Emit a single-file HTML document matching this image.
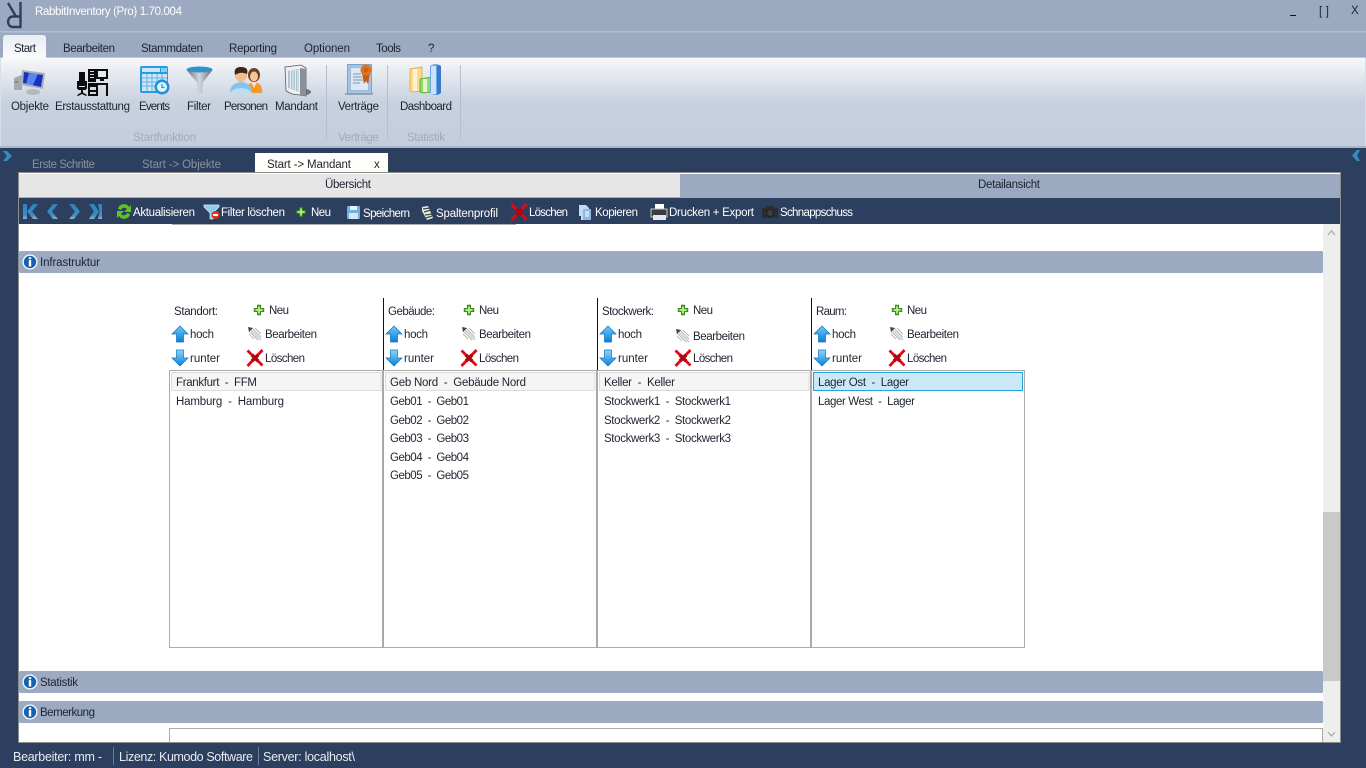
<!DOCTYPE html>
<html lang="de"><head><meta charset="utf-8"><title>RabbitInventory</title>
<style>
html,body{margin:0;padding:0;width:1366px;height:768px;overflow:hidden;background:#2d3f5e}
svg{display:block}
text{font-family:"Liberation Sans",sans-serif;font-size:11.5px;fill:#1d2430}
.w{fill:#fff}.g{fill:#a4aab6}.t{fill:#87929f}.s{fill:#e8ecf2;font-size:12.5px}
.l{fill:none;stroke:#a9a9a9}
</style></head><body>
<svg width="1366" height="768" viewBox="0 0 1366 768" xmlns="http://www.w3.org/2000/svg">
<defs>
<linearGradient id="rib" x1="0" y1="0" x2="0" y2="1"><stop offset="0" stop-color="#f7f8fa"/><stop offset=".5" stop-color="#c8d1df"/><stop offset="1" stop-color="#c3cddc"/></linearGradient>
<linearGradient id="tab" x1="0" y1="0" x2="0" y2="1"><stop offset="0" stop-color="#e9edf3"/><stop offset="1" stop-color="#fafbfc"/></linearGradient>
<linearGradient id="blue" x1="0" y1="0" x2="0" y2="1"><stop offset="0" stop-color="#6fcafa"/><stop offset="1" stop-color="#0a7fd6"/></linearGradient>
<linearGradient id="blue2" x1="0" y1="0" x2="0" y2="1"><stop offset="0" stop-color="#8fd6fb"/><stop offset="1" stop-color="#0a7fd6"/></linearGradient>
<linearGradient id="steel" x1="0" y1="0" x2="1" y2="0"><stop offset="0" stop-color="#68747f"/><stop offset=".5" stop-color="#cfd6dc"/><stop offset="1" stop-color="#636e78"/></linearGradient>
<linearGradient id="nav" x1="0" y1="0" x2="0" y2="1"><stop offset="0" stop-color="#2a84bd"/><stop offset=".75" stop-color="#3d8dbf"/><stop offset="1" stop-color="#8db1c6"/></linearGradient>
<g id="plus"><path d="M-2-6H2V-2H6V2H2V6H-2V2H-6V-2H-2Z" fill="#6fc13a" stroke="#2f7d18"/><path d="M-1-4H1V4H-1ZM-4-1H4V1H-4Z" fill="#bdf09a"/></g>
<g id="x"><path d="M-7.500-7.500 7.500 7.500M7.500-8-7.500 8" stroke="#e00a16" stroke-width="2.800" fill="none"/><path d="M-3-3 3 3M3-3-3 3" stroke="#b00610" stroke-width="3.600" fill="none"/></g>
<g id="up"><path d="M0-8 8 0H3.500V8H-3.500V0H-8Z" fill="url(#blue)" stroke="#0d73c0" stroke-width=".7"/></g>
<g id="down"><path d="M0 8 8 0H3.500V-8H-3.500V0H-8Z" fill="url(#blue2)" stroke="#0d73c0" stroke-width=".7"/></g>
<g id="edit"><path d="M-6-6 6 6M-3-6 6 3M-6-3 3 6M-6 0-1 5M0-6 6 0" stroke="#9aa99f" stroke-width=".8" fill="none"/><path d="M-7-7-2-6-6-2Z" fill="#444"/><path d="M-4-2 4 6 6 3-1-4Z" fill="#d2dbd4" opacity=".75"/></g>
<g id="info"><circle r="7.500" fill="#fff"/><circle r="6.200" fill="#1463b0"/><rect x="-1.200" y="-2" width="2.400" height="6.500" fill="#fff"/><rect x="-1.200" y="-4.800" width="2.400" height="2" fill="#fff"/></g>
</defs>

<!-- chrome -->
<rect width="1366" height="768" fill="#2d3f5e"/>
<rect width="1366" height="58" fill="#9ba9c1"/>
<rect y="31" width="1366" height="1.500" fill="#b3bfd1"/>
<rect y="58" width="1366" height="88" fill="url(#rib)"/>
<rect y="57" width="1366" height="1" fill="#bcc7d8"/>
<rect y="146" width="1366" height="2" fill="#a9b5c9"/>
<rect x="0" y="58" width="1" height="88" fill="#d8dee8"/>
<rect x="1365" y="58" width="1" height="88" fill="#d8dee8"/>

<!-- logo: R rotated 180 degrees -->
<path d="M20.500 2V27H13C6.500 27 6.500 16.500 13 16.500H20.500M16 16.500 8 3" fill="none" stroke="#2d3f5e" stroke-width="2.400"/>
<text x="35" y="15" textLength="147" class="w">RabbitInventory (Pro) 1.70.004</text>
<rect x="1290" y="15" width="6" height="1" fill="#111"/>
<text x="1319" y="15" textLength="10">[ ]</text>
<text x="1351" y="14" textLength="7">X</text>

<!-- menu -->
<path d="M3 58V38Q3 35 6 35H43Q46 35 46 38V58Z" fill="url(#tab)"/>
<text x="14" y="52" textLength="22">Start</text>
<text x="63" y="52" textLength="52">Bearbeiten</text>
<text x="141" y="52" textLength="62">Stammdaten</text>
<text x="229" y="52" textLength="48">Reporting</text>
<text x="304" y="52" textLength="46">Optionen</text>
<text x="376" y="52" textLength="25">Tools</text>
<text x="428" y="52" textLength="5">?</text>

<!-- Objekte icon -->
<g>
<ellipse cx="33" cy="92" rx="7" ry="3" fill="#b4b9be"/>
<path d="M14 78 22 75V90H14Z" fill="#a4aaaf"/><rect x="15" y="81" width="3" height="2" fill="#5fa35a"/>
<path d="M22 70 45 73 43 89 21 85Z" fill="#aab1b8"/>
<path d="M24 72 43 75 41 87 23 83Z" fill="#1532c0"/><path d="M29 73 38 74 33 85 26 84Z" fill="#5a85f0"/>
</g>
<!-- Erstausstattung icon -->
<g fill="#0c0c0c">
<path d="M79 72H85V86H79Z"/><rect x="77" y="81" width="2" height="8"/><rect x="85" y="81" width="2" height="8"/><path d="M78 87H86V90H78Z"/><rect x="81" y="90" width="2" height="3"/><path d="M77 95 82 92 87 95 86 96 82 94 78 96Z"/>
<path d="M88 69H96V82H88Z"/><rect x="90" y="71" width="4" height="1" fill="#ddd"/><rect x="90" y="74" width="4" height="1" fill="#ddd"/><rect x="90" y="77" width="4" height="1" fill="#ddd"/>
<path d="M96 69H108V79H96ZM98 71V77H106V71Z" fill-rule="evenodd"/><rect x="100" y="79" width="4" height="2"/>
<rect x="88" y="83" width="20" height="2"/><rect x="106" y="85" width="2" height="11"/>
<path d="M88 85H98V96H88ZM90 87V90H96V87ZM90 92V94H96V92Z" fill-rule="evenodd"/>
</g>
<!-- Events icon -->
<g>
<rect x="140" y="66" width="28" height="27" rx="2" fill="#2a9be0"/>
<rect x="142" y="68" width="18" height="4" fill="#c9e7f9"/><rect x="161" y="68" width="6" height="4" fill="#8ccdf2"/>
<rect x="142" y="74" width="25" height="17" fill="#cfe7f6"/>
<path d="M147 74V91M152 74V91M157 74V91M162 74V91M142 78H167M142 82H167M142 86H167" stroke="#5cb3e6" stroke-width="1"/>
<circle cx="162" cy="87" r="7.500" fill="#1c93dc"/><circle cx="162" cy="87" r="5" fill="#e6f5fd"/><path d="M162 84V87.500H164.500" stroke="#1c93dc" fill="none" stroke-width="1.200"/>
</g>
<!-- Filter icon -->
<g>
<path d="M186.500 70H212.500L202.500 83V93H197.500V83Z" fill="url(#steel)"/>
<ellipse cx="199.500" cy="69.500" rx="13" ry="3" fill="#2f93c9"/>
</g>
<!-- Personen icon -->
<g>
<ellipse cx="254" cy="75" rx="6" ry="7" fill="#6e4020"/><ellipse cx="254" cy="76.500" rx="4" ry="5" fill="#f3c69a"/>
<path d="M247 93Q246 83 254 82Q263 83 262 93Z" fill="#f39a2b"/><path d="M251 82H257L254 88Z" fill="#fbe2c4"/>
<ellipse cx="241" cy="75" rx="6" ry="7" fill="#f0bd8d"/><path d="M235 75Q233 67 241 67Q249 67 247 74Q241 71 235 75Z" fill="#3f2612"/>
<path d="M230 93Q230 83 241 82Q252 83 252 93Z" fill="#87c3e6"/><path d="M230 93Q233 88 241 88Q249 88 252 93Z" fill="#b9dff3"/>
</g>
<!-- Mandant icon -->
<g>
<ellipse cx="302" cy="92" rx="9" ry="3.500" fill="#6f7780"/>
<path d="M285 67 301 65 306 68V96L300 95 292 94 286 91Z" fill="#eef0f0" stroke="#555b60" stroke-width=".8"/>
<path d="M288 71 299 69V92L288 88Z" fill="#aec6d4"/>
<path d="M290.500 70V89M293 70V90M295.500 70V91M298 70V91" stroke="#e7eef2" stroke-width="1"/>
<path d="M300 68 306 69V96L300 95Z" fill="#8a9095"/>
</g>
<!-- Vertraege icon -->
<g>
<rect x="345" y="93" width="28" height="2" fill="#98a3b3"/>
<rect x="347.500" y="64.500" width="24" height="29" fill="#a3c4e8" stroke="#7ea3c8"/>
<rect x="350.500" y="67.500" width="18" height="23" fill="#dbe9f7" stroke="#8d9fb2" stroke-dasharray="1 1"/>
<path d="M353 74H361M353 77H362M353 80H364M353 83H360" stroke="#7d98b2" stroke-width="1"/>
<path d="M362 73 364 84 366 81 368 84 370 73Z" fill="#c55e16"/><circle cx="366" cy="70" r="5.500" fill="#e2741d"/><circle cx="366" cy="70" r="2.500" fill="#c4601a"/>
</g>
<!-- Dashboard icon -->
<g>
<path d="M410 69 422 67V91L413 92 410 91Z" fill="#fcd98c" stroke="#dca53a" stroke-width=".8"/><path d="M413 69 417 69V91H413Z" fill="#fff3d6"/>
<path d="M420 79 432 77V92L423 93 420 92Z" fill="#8fdc66" stroke="#54a52f" stroke-width=".8"/><path d="M423 79H427V92H423Z" fill="#dff8cc"/>
<path d="M430 66Q436 62 441 66V93Q436 97 430 93Z" fill="#6ba6ea"/><path d="M431 66H436V94H431Z" fill="#c9e3fc"/><path d="M437 65 441 66V93L437 95Z" fill="#3b78cc"/>
</g>

<!-- ribbon labels -->
<text x="11" y="110" textLength="38">Objekte</text>
<text x="55" y="110" textLength="75">Erstausstattung</text>
<text x="139" y="110" textLength="31">Events</text>
<text x="187" y="110" textLength="24">Filter</text>
<text x="224" y="110" textLength="44">Personen</text>
<text x="275" y="110" textLength="43">Mandant</text>
<text x="338" y="110" textLength="41">Verträge</text>
<text x="400" y="110" textLength="52">Dashboard</text>
<text x="133" y="141" textLength="63" class="g">Startfunktion</text>
<text x="338" y="141" textLength="41" class="g">Verträge</text>
<text x="407" y="141" textLength="38" class="g">Statistik</text>
<path d="M326.500 65V140M387.500 65V140M460.500 65V140" stroke="#b3bfd1"/>

<!-- side chevrons -->
<path d="M3 151H7L12 156 7 161H3L7 156Z" fill="#2e8fc4"/>
<path d="M1360 150H1357L1352 155.500 1357 161H1360L1357 155.500Z" fill="#2e8fc4"/>

<!-- doc tabs -->
<text x="32" y="168" textLength="63" class="t">Erste Schritte</text>
<text x="142" y="168" textLength="79" class="t">Start -&gt; Objekte</text>
<rect x="255" y="153" width="133" height="21" fill="#fefef9"/>
<text x="267" y="168" textLength="84">Start -&gt; Mandant</text>
<text x="374" y="168" textLength="5">x</text>

<!-- content panel -->
<rect x="18" y="172" width="1323" height="571" fill="#8c8c8c"/>
<rect x="19" y="173" width="1321" height="569" fill="#fff"/>
<rect x="19" y="174" width="661" height="23" fill="#e6e6e6"/>
<rect x="19" y="197" width="661" height="1" fill="#a4afc2"/>
<rect x="680" y="174" width="660" height="24" fill="#9ba9c1"/>
<text x="325" y="188" textLength="46">Übersicht</text>
<text x="978" y="188" textLength="62">Detailansicht</text>
<rect x="19" y="198" width="1321" height="26" fill="#2d3f5e"/>
<rect x="172" y="224" width="344" height="1" fill="#a8adb5"/>

<!-- toolbar nav -->
<path d="M23 204H27V219H23ZM38 204H33L27 211.500 33 219H38L32 211.500Z" fill="url(#nav)"/>
<path d="M58 204H53L47 211.500 53 219H58L52 211.500Z" fill="url(#nav)"/>
<path d="M69 204H74L80 211.500 74 219H69L75 211.500Z" fill="url(#nav)"/>
<path d="M89 204H94L99 211.500 94 219H89L94 211.500ZM98 204H102V219H98L99.500 211.500Z" fill="url(#nav)"/>
<!-- refresh -->
<path d="M118 209A6 6 0 0 1 129 207L131 205V212H124L127 209A3.500 3.500 0 0 0 121 210ZM130 214A6 6 0 0 1 119 216L117 218V211H124L121 214A3.500 3.500 0 0 0 127 213Z" fill="#58c81e"/>
<!-- filter delete -->
<path d="M204 205H219V207L213 213V219H210V213L204 207Z" fill="#8fcdf0" stroke="#dbe9f3" stroke-width=".7"/>
<circle cx="215.500" cy="215" r="4" fill="#e2331f"/><rect x="213" y="214" width="5" height="2" fill="#fff"/>
<!-- toolbar texts and icons -->
<text x="133" y="216" textLength="62" class="w">Aktualisieren</text>
<text x="221" y="216" textLength="64" class="w">Filter löschen</text>
<use href="#plus" transform="translate(301 212) scale(.75)"/>
<text x="311" y="216" textLength="20" class="w">Neu</text>
<rect x="347" y="206" width="13" height="13" rx="1" fill="#6cb2e6"/><rect x="350" y="206" width="7" height="4" fill="#e8f2fa"/><rect x="349" y="213" width="9" height="6" fill="#d7e6f2"/>
<text x="363" y="217" textLength="47" class="w">Speichern</text>
<g transform="translate(427 213)"><path d="M-5-6 1-7 6 5 0 7-5-2Z" fill="#e8eee9"/><path d="M-4-4 3-5M-3-1 4-3M-2 2 5 1M-1 5 5 3" stroke="#3c4a3f" stroke-width="1.200"/></g>
<text x="436" y="217" textLength="62" class="w">Spaltenprofil</text>
<use href="#x" transform="translate(519 212)"/>
<text x="529" y="216" textLength="39" class="w">Löschen</text>
<path d="M579 205H586L589 208V218H583V220H581V216H579Z" fill="#c3dcf3"/><rect x="583" y="209" width="8" height="11" fill="#8ab8e3"/><path d="M585 212H589M585 214H589M585 216H589" stroke="#fff"/>
<rect x="655" y="204" width="9" height="5" fill="#fff"/><rect x="651" y="209" width="16" height="8" fill="#3a3d40" stroke="#c5c8cb"/><rect x="653" y="215" width="13" height="5" fill="#e6e7e8"/>
<text x="595" y="216" textLength="43" class="w">Kopieren</text>
<text x="669" y="216" textLength="85" class="w">Drucken + Export</text>
<path d="M762 208H766L767 206H773L774 208H778V218H762Z" fill="#2b2d30"/><circle cx="770" cy="213" r="3.500" fill="#3d4045" stroke="#1f2022"/>
<text x="780" y="216" textLength="73" class="w">Schnappschuss</text>

<!-- scrollbar -->
<rect x="1323" y="224" width="17" height="518" fill="#eeeeee"/>
<rect x="1323" y="512" width="17" height="169" fill="#c9c9c9"/>
<path d="M1328 235 1331.500 231 1335 235" fill="none" stroke="#ababab" stroke-width="1.300"/>
<path d="M1328 732 1331.500 736 1335 732" fill="none" stroke="#ababab" stroke-width="1.300"/>

<!-- section bars -->
<rect x="19" y="251" width="1304" height="22" rx="1.500" fill="#9ba9c1"/>
<rect x="19" y="671" width="1304" height="22" rx="1.500" fill="#9ba9c1"/>
<rect x="19" y="701" width="1304" height="22" rx="1.500" fill="#9ba9c1"/>
<use href="#info" x="30" y="262"/><use href="#info" x="30" y="682"/><use href="#info" x="30" y="712"/>
<text x="40" y="266" textLength="60">Infrastruktur</text>
<text x="40" y="686" textLength="38">Statistik</text>
<text x="40" y="716" textLength="55">Bemerkung</text>
<path d="M169.500 743V728.500H1322.500V742" class="l"/>

<!-- vertical dividers -->
<path d="M383.500 298V370M597.500 298V370M811.500 298V370" stroke="#111"/>

<!-- lists -->
<rect x="169.500" y="370.500" width="213" height="277" class="l"/>
<rect x="383.500" y="370.500" width="213" height="277" class="l"/>
<rect x="597.500" y="370.500" width="213" height="277" class="l"/>
<rect x="811.500" y="370.500" width="213" height="277" class="l"/>
<rect x="171.500" y="372.500" width="209.500" height="18" fill="#f5f5f5" stroke="#dcdcdc"/>
<rect x="385.500" y="372.500" width="209.500" height="18" fill="#f5f5f5" stroke="#dcdcdc"/>
<rect x="599.500" y="372.500" width="209.500" height="18" fill="#f5f5f5" stroke="#dcdcdc"/>
<rect x="813.500" y="372.500" width="209" height="18" fill="#cbe8f6" stroke="#26a0da"/>

<!-- column 1 controls -->
<text x="174" y="315" textLength="44">Standort:</text>
<use href="#plus" transform="translate(259 310) scale(.8)"/><text x="269" y="314" textLength="20">Neu</text>
<use href="#up" x="180" y="334"/><text x="190" y="338" textLength="24">hoch</text>
<use href="#edit" x="255" y="334"/><text x="265" y="338" textLength="52">Bearbeiten</text>
<use href="#down" x="180" y="358"/><text x="190" y="362" textLength="30">runter</text>
<use href="#x" x="255" y="358"/><text x="265" y="362" textLength="40">Löschen</text>

<!-- column 2 controls -->
<text x="388" y="315" textLength="47">Gebäude:</text>
<use href="#plus" transform="translate(469 310) scale(.8)"/><text x="479" y="314" textLength="20">Neu</text>
<use href="#up" x="394" y="334"/><text x="404" y="338" textLength="24">hoch</text>
<use href="#edit" x="469" y="334"/><text x="479" y="338" textLength="52">Bearbeiten</text>
<use href="#down" x="394" y="358"/><text x="404" y="362" textLength="30">runter</text>
<use href="#x" x="469" y="358"/><text x="479" y="362" textLength="40">Löschen</text>

<!-- column 3 controls -->
<text x="602" y="315" textLength="52">Stockwerk:</text>
<use href="#plus" transform="translate(683 310) scale(.8)"/><text x="693" y="314" textLength="20">Neu</text>
<use href="#up" x="608" y="334"/><text x="618" y="338" textLength="24">hoch</text>
<use href="#edit" x="683" y="336"/><text x="693" y="340" textLength="52">Bearbeiten</text>
<use href="#down" x="608" y="358"/><text x="618" y="362" textLength="30">runter</text>
<use href="#x" x="683" y="358"/><text x="693" y="362" textLength="40">Löschen</text>

<!-- column 4 controls -->
<text x="816" y="315" textLength="31">Raum:</text>
<use href="#plus" transform="translate(897 310) scale(.8)"/><text x="907" y="314" textLength="20">Neu</text>
<use href="#up" x="822" y="334"/><text x="832" y="338" textLength="24">hoch</text>
<use href="#edit" x="897" y="334"/><text x="907" y="338" textLength="52">Bearbeiten</text>
<use href="#down" x="822" y="358"/><text x="832" y="362" textLength="30">runter</text>
<use href="#x" x="897" y="358"/><text x="907" y="362" textLength="40">Löschen</text>

<!-- list items -->
<text x="176" y="386" textLength="81">Frankfurt &#160;-&#160; FFM</text>
<text x="176" y="405" textLength="108">Hamburg &#160;-&#160; Hamburg</text>
<text x="390" y="386" textLength="136">Geb Nord &#160;-&#160; Gebäude Nord</text>
<text x="390" y="405" textLength="79">Geb01 &#160;-&#160; Geb01</text>
<text x="390" y="424" textLength="79">Geb02 &#160;-&#160; Geb02</text>
<text x="390" y="442" textLength="79">Geb03 &#160;-&#160; Geb03</text>
<text x="390" y="461" textLength="79">Geb04 &#160;-&#160; Geb04</text>
<text x="390" y="479" textLength="79">Geb05 &#160;-&#160; Geb05</text>
<text x="604" y="386" textLength="71">Keller &#160;-&#160; Keller</text>
<text x="604" y="405" textLength="127">Stockwerk1 &#160;-&#160; Stockwerk1</text>
<text x="604" y="424" textLength="127">Stockwerk2 &#160;-&#160; Stockwerk2</text>
<text x="604" y="442" textLength="127">Stockwerk3 &#160;-&#160; Stockwerk3</text>
<text x="818" y="386" textLength="91">Lager Ost &#160;-&#160; Lager</text>
<text x="818" y="405" textLength="97">Lager West &#160;-&#160; Lager</text>

<!-- status bar -->
<text x="13" y="761" textLength="89" class="s">Bearbeiter: mm -</text>
<rect x="113" y="747" width="1" height="18" fill="#6d7c94"/>
<text x="119" y="761" textLength="134" class="s">Lizenz: Kumodo Software</text>
<rect x="258" y="747" width="1" height="18" fill="#6d7c94"/>
<text x="263" y="761" textLength="92" class="s">Server: localhost\</text>
</svg>
</body></html>
